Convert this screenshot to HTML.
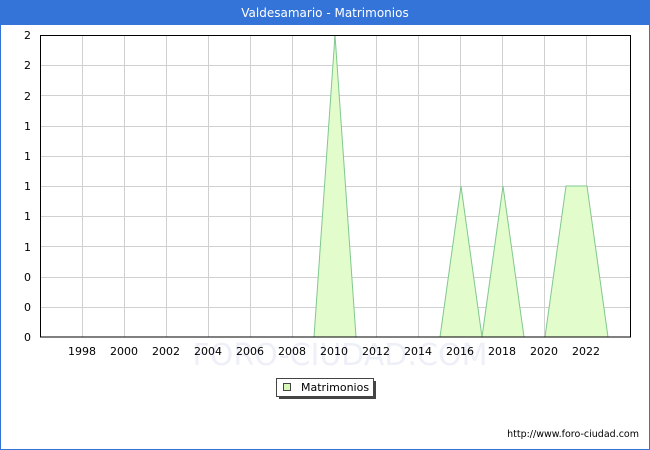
<!DOCTYPE html><html><head><style>body{margin:0;}svg{display:block}</style></head><body>
<svg width="650" height="450" xmlns="http://www.w3.org/2000/svg" font-family="DejaVu Sans, sans-serif">
<rect x="0" y="0" width="650" height="450" fill="#fff"/>
<rect x="0.5" y="0.5" width="649" height="449" fill="none" stroke="#3473d8"/>
<rect x="0" y="0" width="650" height="25" fill="#3473d8"/>
<text x="325" y="17" fill="#fff" font-size="12" text-anchor="middle">Valdesamario - Matrimonios</text>
<text x="340" y="365" fill="#eef0f8" font-size="30" text-anchor="middle">FORO-CIUDAD.COM</text>
<g stroke="#d0d0d0" stroke-width="1">
<line x1="82.5" y1="35" x2="82.5" y2="337"/><line x1="124.5" y1="35" x2="124.5" y2="337"/><line x1="166.5" y1="35" x2="166.5" y2="337"/><line x1="208.5" y1="35" x2="208.5" y2="337"/><line x1="250.5" y1="35" x2="250.5" y2="337"/><line x1="292.5" y1="35" x2="292.5" y2="337"/><line x1="334.5" y1="35" x2="334.5" y2="337"/><line x1="376.5" y1="35" x2="376.5" y2="337"/><line x1="418.5" y1="35" x2="418.5" y2="337"/><line x1="460.5" y1="35" x2="460.5" y2="337"/><line x1="502.5" y1="35" x2="502.5" y2="337"/><line x1="544.5" y1="35" x2="544.5" y2="337"/><line x1="586.5" y1="35" x2="586.5" y2="337"/>
<line x1="40" y1="65.5" x2="631" y2="65.5"/><line x1="40" y1="95.5" x2="631" y2="95.5"/><line x1="40" y1="126.5" x2="631" y2="126.5"/><line x1="40" y1="156.5" x2="631" y2="156.5"/><line x1="40" y1="186.5" x2="631" y2="186.5"/><line x1="40" y1="216.5" x2="631" y2="216.5"/><line x1="40" y1="246.5" x2="631" y2="246.5"/><line x1="40" y1="277.5" x2="631" y2="277.5"/><line x1="40" y1="307.5" x2="631" y2="307.5"/>
</g>
<g fill="#e2fccc" stroke="#80c890" stroke-width="1">
<polygon points="314,337 335,35 356,337"/>
<polygon points="440,337 461,186 482,337"/>
<polygon points="482,337 503,186 524,337"/>
<polygon points="545,337 566,186 587,186 608,337"/>
</g>
<rect x="40.5" y="35.5" width="590" height="301.5" fill="none" stroke="#000"/>
<g font-size="11" fill="#000" text-anchor="end">
<text x="31" y="39">2</text><text x="31" y="69">2</text><text x="31" y="100">2</text><text x="31" y="130">1</text><text x="31" y="160">1</text><text x="31" y="190">1</text><text x="31" y="220">1</text><text x="31" y="251">1</text><text x="31" y="281">0</text><text x="31" y="311">0</text><text x="31" y="341">0</text>
</g>
<g font-size="11" fill="#000" text-anchor="middle">
<text x="82" y="355">1998</text><text x="124" y="355">2000</text><text x="166" y="355">2002</text><text x="208" y="355">2004</text><text x="250" y="355">2006</text><text x="292" y="355">2008</text><text x="334" y="355">2010</text><text x="376" y="355">2012</text><text x="418" y="355">2014</text><text x="460" y="355">2016</text><text x="502" y="355">2018</text><text x="544" y="355">2020</text><text x="586" y="355">2022</text>
</g>
<rect x="279" y="381" width="97" height="18" fill="#444"/>
<rect x="276.5" y="378.5" width="97" height="18" fill="#fff" stroke="#444"/>
<rect x="283.5" y="383.5" width="7" height="7" fill="#d8f8b8" stroke="#444"/>
<text x="301" y="391" font-size="11">Matrimonios</text>
<text x="639" y="437" font-size="9.5" text-anchor="end">http://www.foro-ciudad.com</text>
</svg>
</body></html>
